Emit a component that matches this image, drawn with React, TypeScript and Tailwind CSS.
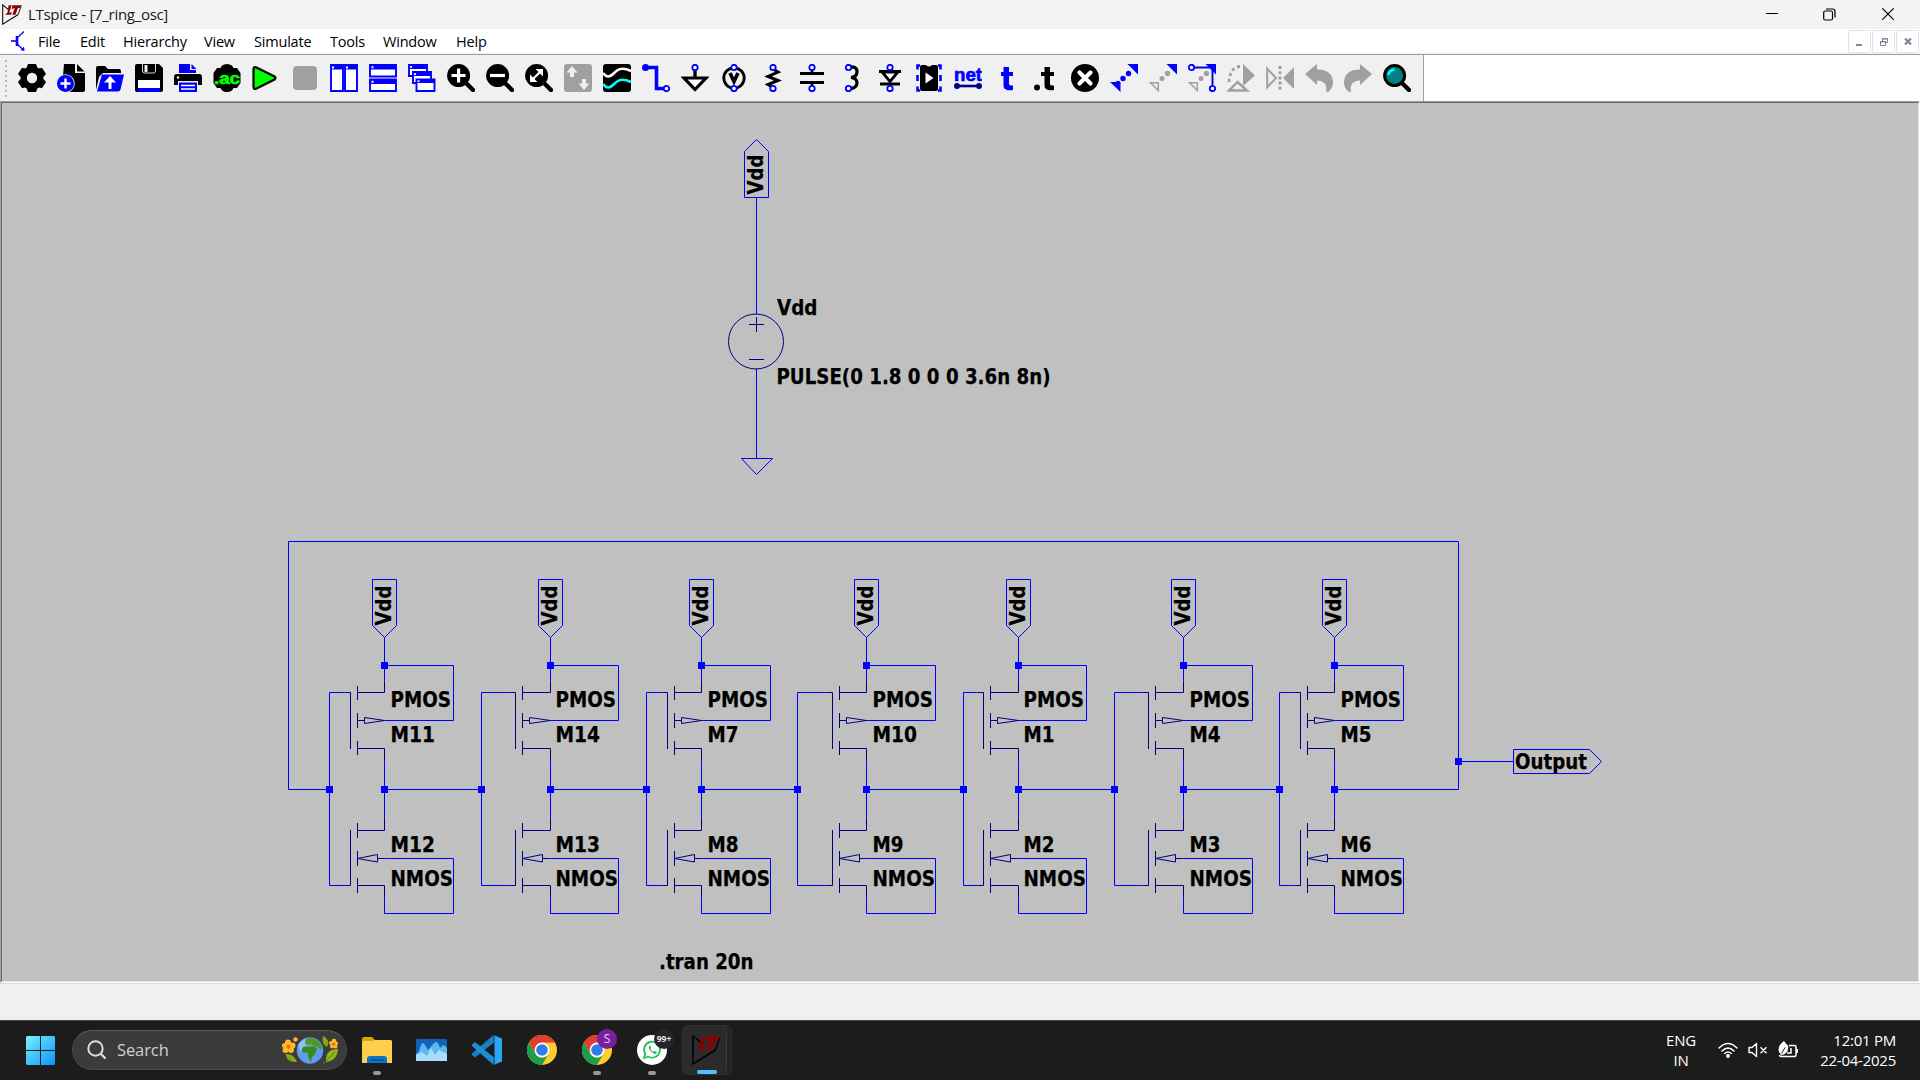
import React from "react";

const UI = "font-['Open_Sans','Noto_Sans',sans-serif]";
const B = "#0000ff";
const G = "#a0a0a0";

type IconProps = { children: React.ReactNode };
const Icon = ({ children }: IconProps) => (
  <svg viewBox="0 0 28 28" className="h-7 w-7 shrink-0" fill="none">
    {children}
  </svg>
);

const Pin = ({ x, y }: { x: number; y: number }) => (
  <circle cx={x} cy={y} r="2.7" fill="#fff" stroke={B} strokeWidth="1.8" />
);

const Lens = ({ children }: { children: React.ReactNode }) => (
  <Icon>
    <circle cx="11.6" cy="11.6" r="11.5" fill="#000" />
    <path d="M18 18L26 26" stroke="#000" strokeWidth="4.4" strokeLinecap="round" />
    {children}
  </Icon>
);

const WordGlyph = ({ x, y, size, fill, children, w }: { x: number; y: number; size: number; fill: string; children: string; w: number }) => (
  <text x={x} y={y} fontSize={size} fill={fill} stroke={fill} strokeWidth="0.7" fontWeight="bold" fontFamily="Liberation Sans, sans-serif" textLength={w} lengthAdjust="spacingAndGlyphs">
    {children}
  </text>
);

const toolbar: React.ReactNode[] = [
  <Icon key="gear">
    <path fillRule="evenodd" fill="#000" d="M10 0h8l1.300 3.600q1 .5 1.700 1l3-.8 4 6.200-2.600 3v2l2.600 3-4 6.200-3-.8q-.7.500-1.700 1L18 28h-8l-1.300-3.600q-1-.5-1.700-1l-3 .8L0 18l2.600-3v-2L0 10l4-6.200 3 .8q.7-.5 1.700-1zM14 8.800a5.200 5.200 0 100 10.400 5.200 5.200 0 000-10.400z" />
  </Icon>,
  <Icon key="new">
    <path d="M7 0h11v9h10v17q0 2-2 2H6V12z" fill="#000" />
    <path d="M20 0L27.500 7.500H20z" fill="#000" />
    <circle cx="8.500" cy="19.500" r="9.300" fill="#efefef" />
    <circle cx="8.500" cy="19.500" r="8.500" fill={B} />
    <path d="M8.500 14.500v10M3.500 19.500h10" stroke="#fff" strokeWidth="2.400" />
  </Icon>,
  <Icon key="open">
    <path d="M0 26V4q0-2 2-2h7l3 3h11q2 0 2 2v2H7L3 13z" fill="#000" />
    <path d="M6 10.500h22l-3.500 15q-.5 2-2.500 2H1z" fill={B} />
    <path d="M14 25v-8" stroke="#fff" strokeWidth="3" />
    <path d="M14 12l-6 6.500h12z" fill="#fff" />
  </Icon>,
  <Icon key="save">
    <path d="M2 0h22l4 4v22q0 2-2 2H2q-2 0-2-2V2q0-2 2-2z" fill="#000" />
    <path d="M7.500 0v7q0 2 2 2h9q2 0 2-2V0" stroke="#d8d8d8" strokeWidth="1" />
    <path d="M9.500 1h3v7h-3z" fill="#efefef" />
    <path d="M3 16h22v8H3z" fill="#fff" />
    <path d="M3 24h22v4H3z" fill={B} />
  </Icon>,
  <Icon key="print">
    <path d="M5 0h11v6h6v3H5z" fill={B} />
    <path d="M17.500 0l5 5h-5z" fill={B} />
    <path d="M3 10h22q3 0 3 3v8h-4v-4H4v4H0v-8q0-3 3-3z" fill="#000" />
    <circle cx="4" cy="13.500" r="1.200" fill="#fff" />
    <path d="M5 18.500h18V28H5z" fill={B} />
    <path d="M7 21.500h14M7 25h14" stroke="#fff" strokeWidth="1.600" />
  </Icon>,
  <Icon key="ac">
    <path d="M9 1.500Q14-1.500 19 1.500L20.500 4h3.500L27.500 9v10L24 24h-3.500L19 26.500q-5 3-10 0L7.500 24H4L.5 19V9L4 4h3.500z" fill="#000" />
    <WordGlyph x={1} y={19.500} size={16} fill="#00ff00" w={26}>.ac</WordGlyph>
  </Icon>,
  <Icon key="run">
    <path d="M1.500 5.500Q1.500 2 4.500 3.500L22.500 12.500q2 1.500 0 3L4.500 24.500Q1.500 26 1.500 22.500z" fill="#00ff00" stroke="#000" strokeWidth="2.200" />
  </Icon>,
  <Icon key="stop">
    <rect x="2" y="2" width="24" height="24" rx="4" fill={G} />
  </Icon>,
  <Icon key="tilev">
    <path d="M1 1h12v26H1zM15 1h12v26H15z" fill="#fff" stroke={B} strokeWidth="1.900" />
    <path d="M1 1h12v4.500H1zM15 1h12v4.500H15z" fill={B} />
    <path d="M2 2.500h2v2H2zM16 2.500h2v2h-2z" fill="#fff" />
  </Icon>,
  <Icon key="tileh">
    <path d="M1 1h26v11.500H1zM1 15.500h26V27H1z" fill="#fff" stroke={B} strokeWidth="1.900" />
    <path d="M1 1h26v4.500H1zM1 15.500h26V20H1z" fill={B} />
    <path d="M2.500 2.200h2v2h-2zM2.500 16.800h2v2h-2z" fill="#fff" />
  </Icon>,
  <Icon key="cascade">
    <path d="M1 1h18v11H1z" fill="#fff" stroke={B} strokeWidth="1.900" />
    <path d="M1 1h18v4H1z" fill={B} />
    <path d="M5 8h18v11H5z" fill="#fff" stroke={B} strokeWidth="1.900" />
    <path d="M5 8h18v4H5z" fill={B} />
    <path d="M8.500 15.500h18V27h-18z" fill="#fff" stroke={B} strokeWidth="1.900" />
    <path d="M8.500 15h18v4h-18z" fill={B} />
    <path d="M2 2h2v1.800H2zM6 9.200h2V11H6zM9.500 16.200h2V18h-2z" fill="#fff" />
  </Icon>,
  <Lens key="zin">
    <path d="M11.600 4.500v14M4.500 11.500h14" stroke="#fff" strokeWidth="3.200" />
  </Lens>,
  <Lens key="zout">
    <path d="M4 11.500h15" stroke="#fff" strokeWidth="3.200" />
  </Lens>,
  <Lens key="zfit">
    <path d="M7 16L16 7" stroke="#fff" strokeWidth="2.200" />
    <path d="M10.500 5h7.500v7.500zM5 10.500V18h7.500z" fill="#fff" />
  </Lens>,
  <Icon key="autorange">
    <rect width="28" height="28" rx="3" fill={G} />
    <path d="M8 2L2.500 8.500H6V13h4V8.500h3.500zM20 26l5.500-6.500H22V15h-4v4.500h-3.500z" fill="#efefef" />
  </Icon>,
  <Icon key="wave">
    <rect width="28" height="28" rx="3" fill="#000" />
    <path d="M0 9c3 4 6 5 10 1s8-8 18-3" stroke="#fff" strokeWidth="2.600" />
    <path d="M0 20c3 4 6 5 10 1s8-8 18-3" stroke="#00ffff" strokeWidth="2.600" />
  </Icon>,
  <Icon key="wire">
    <path d="M3 3.500h11.500v21H23" stroke={B} strokeWidth="3.600" />
    <circle cx="3.500" cy="3.500" r="3.500" fill={B} />
    <Pin x={24.500} y={24.500} />
  </Icon>,
  <Icon key="gnd">
    <path d="M14 5v9" stroke="#000" strokeWidth="3.400" />
    <path d="M3 14h22L14 25.500z" stroke="#000" strokeWidth="3.200" fill="#fff" />
    <Pin x={14} y={3.500} />
  </Icon>,
  <Icon key="volt">
    <circle cx="14" cy="14" r="10.200" fill="#efefef" stroke="#000" strokeWidth="2.800" />
    <path d="M10 9l4 8.500L18 9" stroke="#000" strokeWidth="3.600" />
    <Pin x={14} y={3.500} />
    <Pin x={14} y={24.500} />
  </Icon>,
  <Icon key="res">
    <path d="M14 5l5 3-10 4.500 10 4-10 4 5 3" stroke="#000" strokeWidth="3" />
    <Pin x={14} y={3.500} />
    <Pin x={14} y={24.500} />
  </Icon>,
  <Icon key="cap">
    <path d="M2 9.500h24M2 18.500h24" stroke="#000" strokeWidth="3" />
    <path d="M14 5v4M14 19v4" stroke="#000" strokeWidth="2.500" />
    <Pin x={14} y={3.500} />
    <Pin x={14} y={24.500} />
  </Icon>,
  <Icon key="ind">
    <path d="M12 3q8-1 8 4.500T14 13.500q6 .5 6 5.500t-8 6" stroke="#000" strokeWidth="3.200" />
    <Pin x={11.500} y={3.500} />
    <Pin x={11.500} y={24.500} />
  </Icon>,
  <Icon key="diode">
    <path d="M3 7.500h22M4 20h20" stroke="#000" strokeWidth="3" />
    <path d="M6 8h16l-8 9.500z" stroke="#000" strokeWidth="2.800" fill="#fff" />
    <Pin x={14} y={3.500} />
    <Pin x={14} y={24.500} />
  </Icon>,
  <Icon key="component">
    <path d="M5 3q0-2 2-2h4q3 3 6 0h4q2 0 2 2v22q0 2-2 2H7q-2 0-2-2z" fill="#000" />
    <path d="M10.500 8.500v11l8-5.500z" fill="#fff" />
    <path d="M5 1.500H2.500v4M23 1.500h2.500v4M5 26.500H2.500v-4M23 26.500h2.500v-4M2.500 11v6M25.500 11v6" stroke={B} strokeWidth="2.600" />
  </Icon>,
  <Icon key="net">
    <WordGlyph x={0} y={16.500} size={19} fill={B} w={28}>net</WordGlyph>
    <path d="M3 22h22" stroke="#000080" strokeWidth="2.600" />
    <circle cx="3" cy="22" r="3" fill="#000080" />
    <circle cx="25" cy="22" r="3" fill="#000080" />
  </Icon>,
  <Icon key="t">
    <path d="M10.500 3H16v5h4v4h-4v8q0 2 4 1.500V26q-9.500 1.500-9.500-4.500V12H8V8h2.500z" fill={B} />
  </Icon>,
  <Icon key="dott">
    <path d="M12.500 3H18v5h4v4h-4v8q0 2 4 1.500V26q-9.500 1.500-9.500-4.500V12H9V8h3.500z" fill="#000" />
    <circle cx="5" cy="23.500" r="3" fill="#000" />
  </Icon>,
  <Icon key="del">
    <circle cx="14" cy="14" r="14" fill="#000" />
    <path d="M8.500 8.500l11 11M19.500 8.500l-11 11" stroke="#fff" strokeWidth="4.200" strokeLinecap="round" />
  </Icon>,
  <Icon key="move">
    <path d="M17.500 0H28v10.500zM0 18h10.500v10z" fill={B} />
    <circle cx="18.500" cy="9.500" r="2.700" fill={B} />
    <circle cx="13" cy="14.500" r="2.700" fill={B} />
    <circle cx="8" cy="19" r="2.300" fill={B} />
  </Icon>,
  <Icon key="copy">
    <path d="M17.500 0H28v10.500z" fill={B} />
    <circle cx="18.500" cy="9.500" r="2.700" fill={G} />
    <circle cx="13" cy="14.500" r="2.500" fill={G} />
    <path d="M1.500 18.700h7.800v7.800z" stroke={G} strokeWidth="1.500" fill="#efefef" />
  </Icon>,
  <Icon key="drag">
    <path d="M3.500 3.500h21v21" stroke={B} strokeWidth="1.900" />
    <path d="M17.500 0H28v10.500z" fill={B} />
    <circle cx="18.500" cy="9.500" r="2.700" fill={G} />
    <circle cx="13" cy="14.500" r="2.500" fill={G} />
    <path d="M1.500 18.700h7.800v7.800z" stroke={G} strokeWidth="1.500" fill="#efefef" />
    <Pin x={3.500} y={3.500} />
    <Pin x={24.500} y={24.500} />
  </Icon>,
  <Icon key="rotate">
    <path d="M16 0l12 11.500L16 22z" fill={G} />
    <path d="M10.500 18L2 26.500h18z" stroke={G} strokeWidth="2.400" fill="#efefef" />
    <path d="M13 2.500Q3 3 2 18" stroke={G} strokeWidth="2.800" strokeDasharray="3 3" />
  </Icon>,
  <Icon key="mirror">
    <path d="M1.200 4.500v19L10 14z" stroke={G} strokeWidth="2" />
    <path d="M28 3v22L17 14z" fill={G} />
    <path d="M14 2v24" stroke={G} strokeWidth="3" strokeDasharray="3 2.200" />
  </Icon>,
  <Icon key="undo">
    <path d="M0 10L12 0v5.500q16 0 16 13.500 0 5-5 9l-2-.500q2-10.500-9-11V21z" fill={G} />
  </Icon>,
  <Icon key="redo">
    <path d="M28 10L16 0v5.500Q0 5.500 0 19q0 5 5 9l2-.500Q5 17 16 16.500V21z" fill={G} />
  </Icon>,
  <Icon key="find">
    <path d="M18 18L26 26" stroke="#000" strokeWidth="4.400" strokeLinecap="round" />
    <circle cx="11.600" cy="11.600" r="10" fill="#008080" stroke="#000" strokeWidth="3" />
    <path d="M5.500 11q.5-5 6-5.500" stroke="#00ffff" strokeWidth="2.400" />
  </Icon>,
];

const menus: [string, string][] = [
  ["File", "w-[42px]"],
  ["Edit", "w-[43px]"],
  ["Hierarchy", "w-[81px]"],
  ["View", "w-[50px]"],
  ["Simulate", "w-[76px]"],
  ["Tools", "w-[53px]"],
  ["Window", "w-[73px]"],
  ["Help", "w-[40px]"],
];

const LtMark = ({ className }: { className: string }) => (
  <svg viewBox="0 0 29 30" className={className} fill="none">
    <path d="M9 7.500L1 1v28l22.500-14" stroke="#000" strokeWidth="1.500" />
    <path d="M28 2l-4.500 13" stroke="#000" strokeWidth="1.300" />
    <path d="M9.500 1.500H14L10.500 12h4L13 15.500H4.500L8 12z" fill="#8b0000" />
    <path d="M15 1.500h13.500l-3 4H23L19.500 15.500h-4.500L18.500 5.500q-2.500 0-4.500 2.500z" fill="#8b0000" />
  </svg>
);

const TitleBar = () => (
  <header className="flex h-[29px] items-center bg-[#f3f3f3] pb-px">
    <LtMark className="ml-[2px] h-[21px] w-[20px]" />
    <span className="ml-[6px] text-[15px] tracking-[-0.3px] text-[#191919]">LTspice - [7_ring_osc]</span>
    <div className="ml-auto mr-[26px] flex items-center gap-[45px]">
      <svg width="12" height="12" className="shrink-0"><path d="M0 5.500h12" stroke="#000" /></svg>
      <svg width="13" height="13" fill="none" stroke="#000" className="shrink-0">
        <rect x=".7" y="3" width="8.800" height="9" rx="1.500" strokeWidth="1.200" />
        <path d="M3 1h6.500q2.500 0 2.500 2.500V9.500" strokeWidth="1.200" />
      </svg>
      <svg width="12" height="12" className="ml-[1px] shrink-0"><path d="M.3.3l11.400 11.400M11.700.3L.3 11.700" stroke="#000" strokeWidth="1.200" /></svg>
    </div>
  </header>
);

const MenuBar = () => (
  <nav className="flex h-[25px] items-center border-b border-[#f0f0f0] bg-white">
    <svg viewBox="0 0 14 20" className="ml-[11px] h-5 w-[14px]" fill="none" stroke={B}>
      <path d="M0 10h6" strokeWidth="1.600" />
      <path d="M6 5v10" strokeWidth="2.600" />
      <path d="M6 7l7-6.500M6 13l7 6.500" strokeWidth="1.200" />
      <path d="M13.500 19.500h-4l3.500-4z" fill={B} stroke="none" />
    </svg>
    <div className="ml-[13px] flex pt-px text-[14.5px] tracking-[-0.2px] text-black">
      {menus.map(([name, w]) => (
        <span key={name} className={`${w} whitespace-nowrap`}>{name}</span>
      ))}
    </div>
    <div className="ml-auto mr-[1px] flex gap-[1px] pt-px">
      <span className="flex h-[23px] w-[23px] items-center justify-center rounded-[2px] border border-[#e3e3e3]">
        <svg width="8" height="10" className="-ml-[2px]"><path d="M1 8h6" stroke="#778899" strokeWidth="2" /></svg>
      </span>
      <span className="flex h-[23px] w-[23px] items-center justify-center rounded-[2px] border border-[#e3e3e3]">
        <svg width="8" height="8" fill="none" stroke="#778899"><path d="M.5 3.500h5v4h-5zM2.500 3V.500h5v4H6" /><path d="M0 4h6M2 1h6" /></svg>
      </span>
      <span className="flex h-[23px] w-[23px] items-center justify-center rounded-[2px] border border-[#e3e3e3]">
        <svg width="8" height="7" className="ml-[1px]"><path d="M1 .5l6 6M7 .5l-6 6" stroke="#778899" strokeWidth="2.200" /></svg>
      </span>
    </div>
  </nav>
);

const ToolBar = () => (
  <div className="flex h-[47px] border-t border-[#a0a0a0] bg-white">
    <div className="flex w-[1424px] items-center gap-[11px] border-r border-[#a0a0a0] bg-[#f0f0f0]">
      <span className="ml-[5px] mt-[2px] h-[38px] w-[2px] shrink-0 bg-[repeating-linear-gradient(to_bottom,#b8b8b8_0_2px,transparent_2px_5px)]" />
      {toolbar}
    </div>
  </div>
);

type LabelProps = { x: number; y: number; w: number; children: string; rotate?: boolean };
const Label = ({ x, y, w, children, rotate }: LabelProps) => (
  <text
    x={x}
    y={y}
    textLength={w}
    lengthAdjust="spacingAndGlyphs"
    transform={rotate ? `rotate(-90 ${x} ${y})` : undefined}
    className="fill-black stroke-black stroke-[0.25px] font-['DejaVu_Sans',sans-serif] text-[20.5px] font-bold"
  >
    {children}
  </text>
);

const Node = ({ x, y }: { x: number; y: number }) => <rect x={x - 3} y={y - 3} width="7" height="7" fill={B} />;

type Stage = { x: number; gate: number; plate: number; right: number; p: string; n: string };
const stages: Stage[] = [
  { x: 384, gate: 329, plate: 350, right: 453, p: "M11", n: "M12" },
  { x: 550, gate: 481, plate: 515, right: 618, p: "M14", n: "M13" },
  { x: 701, gate: 646, plate: 667, right: 770, p: "M7", n: "M8" },
  { x: 866, gate: 797, plate: 832, right: 935, p: "M10", n: "M9" },
  { x: 1018, gate: 963, plate: 983, right: 1086, p: "M1", n: "M2" },
  { x: 1183, gate: 1114, plate: 1148, right: 1252, p: "M4", n: "M3" },
  { x: 1334, gate: 1279, plate: 1300, right: 1403, p: "M5", n: "M6" },
];

const Inverter = ({ x, gate, plate, right, p, n }: Stage) => {
  const ch = plate + 7;
  const tx = right - 62.500;
  const nameW = (s: string) => (s.length === 3 ? 44.500 : 31);
  return (
    <g>
      <g transform="translate(.5 .5)" stroke={B} fill="none">
        <path d={`M${x - 12} 625V579H${x + 12}V625L${x} 637Z`} />
        <path d={`M${x} 637V680M${x} 665H${right}V720H${x}M${x} 761V817M${x} 858H${right}V913H${x}V898`} />
        <path d={`M${plate - 6} 692H${gate}V885H${plate - 6}`} />
      </g>
      <g transform="translate(.5 .5)" stroke="#000080" fill="none">
        <path d={`M${x} 680V692H${ch}M${x} 761V748H${ch}M${x} 817V830H${ch}M${x} 898V885H${ch}`} />
        <path d={`M${plate - 6} 692H${plate}V748.500M${plate - 6} 885H${plate}V829.500`} />
        <path d={`M${ch} 685.500V699.500M${ch} 712.500V727.500M${ch} 740.500V754.500M${ch} 822.500V837.500M${ch} 850.500V865.500M${ch} 877.500V892.500`} />
        <path d={`M${ch} 720H${ch + 7}V717L${x} 720L${ch + 7} 723V720`} />
        <path d={`M${ch} 858L${ch + 20} 854V861.500L${ch} 858M${ch + 20} 858H${x}`} />
      </g>
      <Node x={x} y={665} />
      <Node x={x} y={789} />
      <Node x={gate} y={789} />
      <Label x={x + 7} y={625.500} w={40} rotate>Vdd</Label>
      <Label x={tx} y={706.500} w={60.500}>PMOS</Label>
      <Label x={tx} y={741.500} w={nameW(p)}>{p}</Label>
      <Label x={tx} y={851.500} w={nameW(n)}>{n}</Label>
      <Label x={tx} y={885.500} w={62.500}>NMOS</Label>
    </g>
  );
};

const Schematic = () => (
  <svg viewBox="2 103 1916 878" width="1916" height="878" className="block">
    <g transform="translate(.5 .5)" stroke={B} fill="none">
      <path d="M329 789H288V541H1458V789H1334M1458 761H1513" />
      <path d="M1513 749H1589L1601 761L1589 773H1513Z" />
      <path d="M384 789H481M550 789H646M701 789H797M866 789H963M1018 789H1114M1183 789H1279" />
      <path d="M744 151L756 139L768 151V197H744ZM756 197V314M756 368V458M741 458H772L756 474Z" />
      <g stroke="#000080">
        <circle cx="755.500" cy="341" r="27.500" />
        <path d="M748.500 324H763.500M756 316.500V331.500M748.500 359H763.500" />
      </g>
    </g>
    {stages.map((s) => (
      <Inverter key={s.x} {...s} />
    ))}
    <Node x={1458} y={761} />
    <Label x={763} y={194.500} w={40} rotate>Vdd</Label>
    <Label x={777} y={314.500} w={40.500}>Vdd</Label>
    <Label x={776.500} y={383.500} w={274}>PULSE(0 1.8 0 0 0 3.6n 8n)</Label>
    <Label x={1515} y={768.500} w={72}>Output</Label>
    <Label x={659} y={968.500} w={94.500}>.tran 20n</Label>
  </svg>
);

const Chrome = () => (
  <svg viewBox="0 0 30 30" className="h-[30px] w-[30px]">
    <circle cx="15" cy="15" r="15" fill="#ffcd2e" />
    <path d="M2 7.500A15 15 0 0128 7.500H15L8.500 18.800z" fill="#e33b2e" />
    <path d="M2 7.500L8.500 18.800a7.500 7.500 0 0013 0L15 30A15 15 0 012 7.500z" fill="#1f9d4c" />
    <circle cx="15" cy="15" r="7.400" fill="#fff" />
    <circle cx="15" cy="15" r="5.800" fill="#2f7cf0" />
  </svg>
);

const AppSlot = ({ children, running }: { children: React.ReactNode; running?: boolean }) => (
  <div className="relative flex h-[50px] w-[55px] items-center justify-center">
    {children}
    {running && <span className="absolute bottom-0 h-[4px] w-[8px] rounded-full bg-[#9a9a9a]" />}
  </div>
);

const EarthArt = () => (
  <svg viewBox="0 0 56 28" className="h-7 w-14">
    <g fill="#fdb92a">
      <circle cx="6" cy="6.500" r="3" /><circle cx="10.500" cy="9.500" r="3" /><circle cx="9" cy="14" r="3" /><circle cx="3.500" cy="14" r="3" /><circle cx="2.500" cy="9.500" r="2.600" />
      <circle cx="13.500" cy="3.500" r="2.200" />
      <circle cx="52" cy="5" r="2.300" /><circle cx="54" cy="7.500" r="2" /><circle cx="53.500" cy="10.500" r="2" /><circle cx="50" cy="10.500" r="2" /><circle cx="49" cy="7" r="2" />
    </g>
    <circle cx="6.500" cy="10.500" r="2" fill="#f0711c" />
    <circle cx="52" cy="8" r="1.500" fill="#f0711c" />
    <circle cx="28" cy="14.500" r="13.200" fill="#5f9bf0" />
    <path d="M16 9q3-5 8-6l2 2-3 3 3 1-3 5-5 1z" fill="#8fc0fb" />
    <path d="M20 12q3-3 7-1l6-1 2 3-2 5-3 3-1 5-3-5v-4l-6-1z" fill="#3c8a17" />
    <path d="M24 3q5-2 9 0 5 3 7 8l-1 3-3-3-4-1-3-2-5 1-1-3z" fill="#4f9a1b" />
    <path d="M3.500 18q8-1 11.500 8-10 1-11.500-8zM41 0q8 4 4 11-6-3-4-11z" fill="#86a80e" />
    <path d="M56 13q-13 0-12 13 11-1 12-13z" fill="#93b51a" />
    <path d="M41 28l12-12" stroke="#5c7d08" />
  </svg>
);

const TaskBar = () => (
  <footer className="flex h-[60px] items-center border-t border-[#454545] bg-[#1c1c1c] pb-px text-white">
    <svg viewBox="0 0 29 29" className="ml-[26px] h-[29px] w-[29px]">
      <defs>
        <linearGradient id="win" x1="0" y1="0" x2="1" y2="1">
          <stop offset="0" stopColor="#7bf0ff" />
          <stop offset="1" stopColor="#0a93f8" />
        </linearGradient>
      </defs>
      <path d="M1 0h13v14H0V1zM15 0h13l1 1v13H15zM0 15h14v14H1l-1-1zM15 15h14v13l-1 1H15z" fill="url(#win)" />
    </svg>
    <div className="ml-[17px] flex h-10 w-[275px] items-center rounded-full border border-[#484848] border-t-[#5c5c5c] bg-[#3b3b3b] pl-[14px] pr-[8px]">
      <svg viewBox="0 0 20 20" className="h-5 w-5" fill="none" stroke="#dcdcdc" strokeLinecap="round">
        <circle cx="8.500" cy="8.500" r="7.200" strokeWidth="2" />
        <path d="M14 14l4 4" strokeWidth="2.400" />
      </svg>
      <span className="ml-[10px] text-[16.5px] tracking-[-0.1px] text-[#cfcfcf]">Search</span>
      <span className="ml-auto"><EarthArt /></span>
    </div>
    <div className="ml-[2px] flex items-center">
      <AppSlot running>
        <svg viewBox="0 0 30 27" className="mt-[1px] h-[27px] w-[30px]">
          <path d="M0 2q0-2 2-2h8l3 3h15q2 0 2 2v5H0z" fill="#e3a008" />
          <path d="M0 6q0-2 2-2h8l3-1h15q2 0 2 2v21H0z" fill="#ffcf4b" />
          <path d="M5 26v-4q0-3 3-3h14q3 0 3 3v4z" fill="#1173c8" />
          <path d="M8.500 23h13" stroke="#0a4a86" strokeWidth="1.400" />
        </svg>
      </AppSlot>
      <AppSlot>
        <svg viewBox="0 0 31 22" className="h-[22px] w-[31px]">
          <rect width="31" height="22" rx="1" fill="#0f62b8" />
          <path d="M0 15q3-1 4-6 2-8 5-3l3 5 6-7q3-3 5 2l1 3 2-2q2-2 5 2v13H0z" fill="#5db7ee" />
          <path d="M0 16l6-3 5 4 4-8 4 7 4-5 8 4v7H0z" fill="#a9defb" />
        </svg>
      </AppSlot>
      <AppSlot>
        <svg viewBox="0 0 30 30" className="h-[30px] w-[30px]">
          <path d="M22 7.500L3 22.500 0 20v-1.500L21.500 0z" fill="#1580c4" />
          <path d="M22 22.500L3 7 0 9.500V11l21.500 19z" fill="#1b8ed8" />
          <path d="M21.500 0L30 3.500v23L21.500 30q1-.500 1-2V2q0-1.500-1-2z" fill="#29a7f3" />
        </svg>
      </AppSlot>
      <AppSlot><Chrome /></AppSlot>
      <AppSlot running>
        <Chrome />
        <span className="absolute left-[28px] top-[4px] flex h-5 w-5 items-center justify-center rounded-full bg-[#7b1fa2] text-[12px] text-[#e6cdef]">S</span>
      </AppSlot>
      <AppSlot running>
        <svg viewBox="0 0 30 30" className="h-[30px] w-[30px]" fill="none">
          <circle cx="15" cy="15" r="15" fill="#fff" />
          <path d="M7 23l1.200-4.300a8 8 0 113.200 3z" stroke="#25c15c" strokeWidth="1.800" />
          <path d="M12 11q-1 3 2.500 6t5 1.500l.3-1.500-2.300-1.200-1.200 1q-2-.8-2.800-2.800l.8-1-1-2.200z" fill="#25c15c" />
        </svg>
        <span className="absolute left-[30px] top-[4px] flex h-5 w-5 items-center justify-center rounded-full bg-[#26262a] text-[8.500px] font-bold text-[#e8e8e8]">99+</span>
      </AppSlot>
      <div className="ml-[3px] flex h-[50px] w-[50px] rounded-[6px] border border-[#303030] bg-[#242424]">
        <div className="relative flex h-[48px] w-[44px] items-center justify-center rounded-[5px] border-r border-[#3b3b3b] bg-[#2b2b2b] pl-[4px]">
          <LtMark className="h-[30px] w-[29px]" />
          <span className="absolute bottom-0 h-[4px] w-[20px] rounded-full bg-[#4cc2ff]" />
        </div>
      </div>
    </div>
    <div className="ml-auto mr-[24px] flex items-center text-[15px] leading-5 tracking-[-0.25px]">
      <div className="w-[30px] text-center">ENG<br />IN</div>
      <svg viewBox="0 0 20 16" className="ml-[22px] h-4 w-5" fill="none" stroke="#fff" strokeWidth="1.500" strokeLinecap="round">
        <path d="M1 6q9-9 18 0M4 9q6-6 12 0M6.800 11.500q3.200-3 6.400 0" />
        <circle cx="10" cy="14" r="1.200" fill="#fff" />
      </svg>
      <svg viewBox="0 0 20 16" className="ml-[10px] h-4 w-5" fill="none" stroke="#fff" strokeWidth="1.400" strokeLinejoin="round">
        <path d="M1 5.500h3L8.500 1.500v13L4 10.500H1zM12.500 5.200l6 6M18.500 5.200l-6 6" />
      </svg>
      <svg viewBox="0 0 20 18" className="ml-[10px] h-[18px] w-5" fill="none" stroke="#fff" strokeWidth="1.500">
        <path d="M11 4.500h5.500q1.500 0 1.500 1.500v8q0 1.500-1.500 1.500H3q-1.500 0-1.500-1.500" />
        <path d="M19 8v4" strokeWidth="2" />
        <path d="M1 11q-2-6 5-11 1.500 2 3 3.500l1.500 2-1 5-3.500 3H3z" fill="#fff" stroke="none" />
        <path d="M3 14l4-6M13 7v5H9" stroke="#fff" />
        <path d="M3.500 12.500l3.500-6" stroke="#1c1c1c" strokeWidth="1" />
      </svg>
      <div className="ml-[17px] w-[81px] whitespace-nowrap text-right">12:01 PM<br />22-04-2025</div>
    </div>
  </footer>
);

export default function App() {
  return (
    <div className={`flex h-[1080px] w-[1920px] flex-col overflow-hidden bg-[#f0f0f0] ${UI}`}>
      <TitleBar />
      <MenuBar />
      <ToolBar />
      <main className="h-[882px] border border-b-white border-l-[#a0a0a0] border-r-white border-t-[#a0a0a0]">
        <div className="h-[880px] border border-b-[#e3e3e3] border-l-[#696969] border-r-[#e3e3e3] border-t-[#696969] bg-[#c0c0c0]">
          <Schematic />
        </div>
      </main>
      <div className="flex-1 border-t border-[#d7d7d7]" />
      <TaskBar />
    </div>
  );
}
